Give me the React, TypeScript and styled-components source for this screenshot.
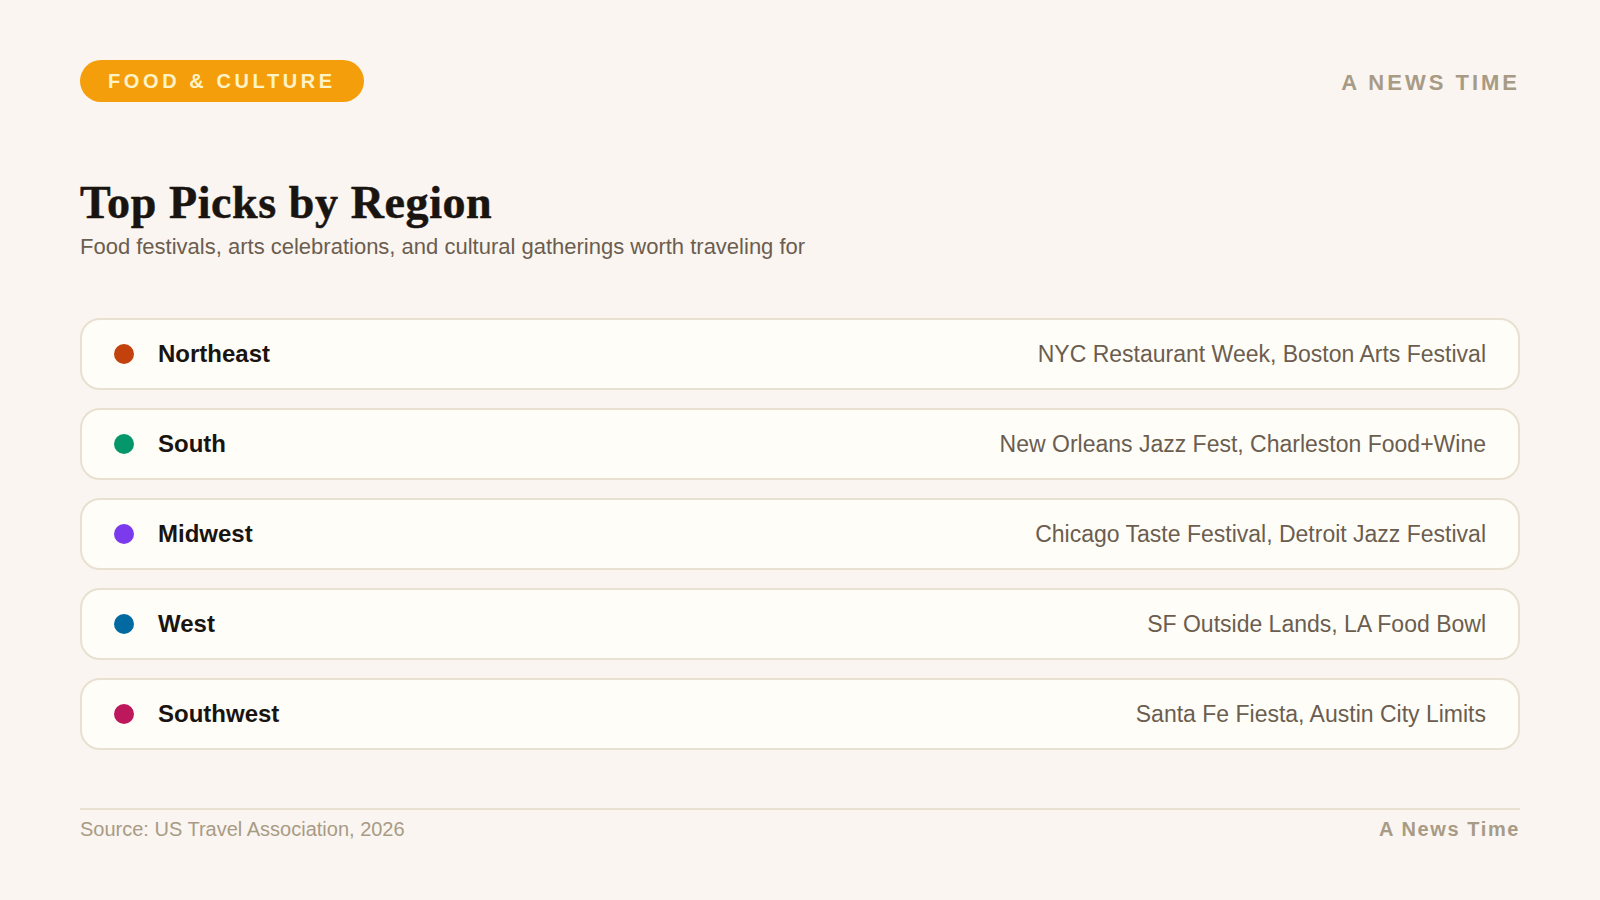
import React from "react";
import styled, { createGlobalStyle } from "styled-components";

const Global = createGlobalStyle`
  html, body { margin: 0; padding: 0; background: #faf5f0; }
  * { box-sizing: border-box; }
`;

const Page = styled.div`
  width: 1600px;
  height: 900px;
  padding: 60px 80px 0;
  background: #faf5f0;
  font-family: "Liberation Sans", Arial, sans-serif;
  display: flex;
  flex-direction: column;
  overflow: hidden;
`;

const Header = styled.header`
  display: flex;
  justify-content: space-between;
  align-items: center;
  height: 42px;
`;

const Badge = styled.div`
  height: 42px;
  padding: 0 28px;
  display: flex;
  align-items: center;
  border-radius: 21px;
  background: #f59e0b;
  color: #fef3c7;
  font-size: 20px;
  font-weight: 700;
  letter-spacing: 3.6px;
`;

const Brand = styled.div`
  color: #a89b85;
  font-size: 22px;
  font-weight: 700;
  letter-spacing: 3px;
  margin-top: 3px;
`;

const Title = styled.h1`
  margin: 76px 0 0;
  color: #1a1410;
  font-family: "Liberation Serif", Georgia, serif;
  font-size: 46px;
  line-height: 50px;
  font-weight: 700;
  letter-spacing: 0.6px;
  -webkit-text-stroke: 0.5px #1a1410;
`;

const Subtitle = styled.p`
  margin: 6px 0 0;
  color: #6b5d4f;
  font-size: 22px;
  line-height: 26px;
`;

const List = styled.div`
  margin-top: 58px;
  display: flex;
  flex-direction: column;
  gap: 18px;
`;

const Row = styled.div`
  height: 72px;
  padding: 0 32px;
  display: flex;
  align-items: center;
  background: #fffdf8;
  border: 2px solid #e8e0d0;
  border-radius: 20px;
`;

const Dot = styled.span<{ $color: string }>`
  width: 20px;
  height: 20px;
  border-radius: 50%;
  background: ${(p) => p.$color};
  margin-right: 24px;
  flex: none;
`;

const Region = styled.span`
  color: #1a1410;
  font-size: 24px;
  font-weight: 700;
`;

const Picks = styled.span`
  margin-left: auto;
  color: #6b5d4f;
  font-size: 23px;
`;

const Footer = styled.footer`
  margin-top: 58px;
  border-top: 2px solid #e8e0d0;
  padding-top: 7px;
  display: flex;
  justify-content: space-between;
  align-items: center;
  color: #a89b85;
`;

const Source = styled.span`
  font-size: 20px;
  line-height: 24px;
`;

const FooterBrand = styled.span`
  font-size: 20px;
  line-height: 24px;
  font-weight: 700;
  letter-spacing: 1.6px;
`;

const rows = [
  { name: "Northeast", color: "#c2410c", picks: "NYC Restaurant Week, Boston Arts Festival" },
  { name: "South", color: "#059669", picks: "New Orleans Jazz Fest, Charleston Food+Wine" },
  { name: "Midwest", color: "#7c3aed", picks: "Chicago Taste Festival, Detroit Jazz Festival" },
  { name: "West", color: "#0369a1", picks: "SF Outside Lands, LA Food Bowl" },
  { name: "Southwest", color: "#be185d", picks: "Santa Fe Fiesta, Austin City Limits" },
];

export default function App() {
  return (
    <Page>
      <Global />
      <Header>
        <Badge>FOOD &amp; CULTURE</Badge>
        <Brand>A NEWS TIME</Brand>
      </Header>
      <Title>Top Picks by Region</Title>
      <Subtitle>Food festivals, arts celebrations, and cultural gatherings worth traveling for</Subtitle>
      <List>
        {rows.map((r) => (
          <Row key={r.name}>
            <Dot $color={r.color} />
            <Region>{r.name}</Region>
            <Picks>{r.picks}</Picks>
          </Row>
        ))}
      </List>
      <Footer>
        <Source>Source: US Travel Association, 2026</Source>
        <FooterBrand>A News Time</FooterBrand>
      </Footer>
    </Page>
  );
}
